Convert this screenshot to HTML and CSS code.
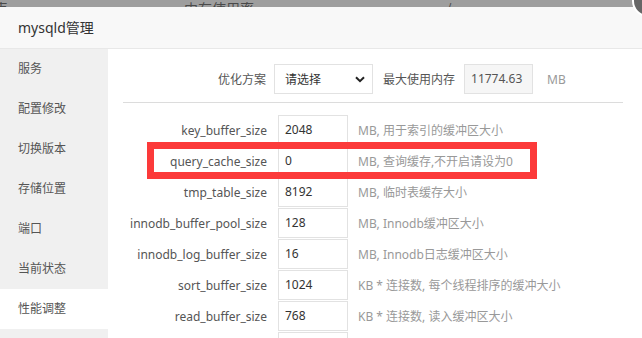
FILE: index.html
```html
<!DOCTYPE html>
<html lang="zh-CN">
<head>
  <meta charset="UTF-8">
  <title>mysqld管理</title>
  <link rel="stylesheet" href="styles.css">
</head>
<body>
  <!-- page behind the dialog, dimmed -->
  <div class="shade">
    <span class="shade-a">表</span>
    <span class="shade-b">内存使用率</span>
    <span class="shade-c">/</span>
  </div>

  <div class="dialog">
    <div class="dialog-title">mysqld管理</div>
    <span class="close-btn"></span>

    <div class="dialog-body">
      <ul class="side-menu">
        <li>服务</li>
        <li>配置修改</li>
        <li>切换版本</li>
        <li>存储位置</li>
        <li>端口</li>
        <li>当前状态</li>
        <li class="active">性能调整</li>
      </ul>

      <div class="panel">
        <div class="top-row">
          <span class="label">优化方案</span>
          <div class="select-box">
            <span>请选择</span>
            <svg width="10" height="7" viewBox="0 0 10 7"><path d="M1 1.2 5 5.2 9 1.2" fill="none" stroke="#222" stroke-width="2"/></svg>
          </div>
          <span class="mem-label">最大使用内存</span>
          <div class="field field-ro">11774.63</div>
          <span class="unit">MB</span>
        </div>

        <div class="divider"></div>

        <div class="form-rows">
          <div class="form-row">
            <span class="label">key_buffer_size</span>
            <div class="field">2048</div>
            <span class="desc">MB, 用于索引的缓冲区大小</span>
          </div>
          <div class="form-row">
            <span class="label">query_cache_size</span>
            <div class="field">0</div>
            <span class="desc">MB, 查询缓存,不开启请设为0</span>
          </div>
          <div class="form-row">
            <span class="label">tmp_table_size</span>
            <div class="field">8192</div>
            <span class="desc">MB, 临时表缓存大小</span>
          </div>
          <div class="form-row">
            <span class="label">innodb_buffer_pool_size</span>
            <div class="field">128</div>
            <span class="desc">MB, Innodb缓冲区大小</span>
          </div>
          <div class="form-row">
            <span class="label">innodb_log_buffer_size</span>
            <div class="field">16</div>
            <span class="desc">MB, Innodb日志缓冲区大小</span>
          </div>
          <div class="form-row">
            <span class="label">sort_buffer_size</span>
            <div class="field">1024</div>
            <span class="desc">KB * 连接数, 每个线程排序的缓冲大小</span>
          </div>
          <div class="form-row">
            <span class="label">read_buffer_size</span>
            <div class="field">768</div>
            <span class="desc">KB * 连接数, 读入缓冲区大小</span>
          </div>
          <div class="form-row form-row-cut">
            <span class="label"></span>
            <div class="field"></div>
          </div>
        </div>

        <!-- red mark drawn on the screenshot -->
        <div class="mark"></div>
      </div>
    </div>
  </div>
</body>
</html>
```

FILE: styles.css
```css
* {
  margin: 0;
  padding: 0;
  box-sizing: border-box;
}

html, body {
  width: 100%;
  height: 100%;
  overflow: hidden;
}

body {
  position: relative;
  background: #fff;
  font-family: "Noto Sans", "Noto Sans CJK SC", sans-serif;
  font-size: 12px;
  color: #555;
}

/* dimmed page at the very top */
.shade {
  position: relative;
  height: 7px;
  background: #9e9e9e;
  overflow: hidden;
  font-family: "Noto Sans CJK SC", sans-serif;
  font-size: 14px;
  color: #4a4a4a;
}

.shade span {
  position: absolute;
  top: 1px;
  line-height: 14px;
}

.shade-a { left: -6px; }
.shade-b { left: 184px; }
.shade-c { left: 446px; }

.dialog {
  position: relative;
}

.dialog-title {
  height: 42px;
  padding-left: 18px;
  line-height: 41px;
  background: #f8f8f8;
  border-bottom: 1px solid #e8e8e8;
  font-size: 14px;
  color: #333;
}

.close-btn {
  position: absolute;
  top: -22px;
  left: 632px;
  width: 32px;
  height: 32px;
  border-radius: 50%;
  background: #666;
  border: 2px solid #fff;
}

.dialog-body {
  display: flex;
  height: 289px;
  overflow: hidden;
}

.side-menu {
  list-style: none;
  width: 108px;
  flex-shrink: 0;
  background: #f0f0f0;
}

.side-menu li {
  height: 40px;
  line-height: 40px;
  padding-left: 18px;
  color: #555;
}

.side-menu li.active {
  background: #fff;
}

.panel {
  position: relative;
  flex: 1;
  padding-top: 15px;
}

.top-row {
  display: flex;
  align-items: center;
  height: 30px;
}

.label {
  width: 158px;
  flex-shrink: 0;
  text-align: right;
  white-space: nowrap;
  color: #555;
}

.top-row .label {
  margin-right: 8px;
}

.select-box {
  display: flex;
  align-items: center;
  justify-content: space-between;
  width: 99px;
  height: 30px;
  padding: 0 7px 0 10px;
  border: 1px solid #e2e2e2;
  color: #333;
}

.mem-label {
  margin: 0 9px 0 10px;
  color: #555;
}

.field {
  width: 70px;
  height: 30px;
  line-height: 28px;
  padding-left: 6px;
  border: 1px solid #e2e2e2;
  color: #333;
  background: #fff;
}

.field-ro {
  width: 69px;
  background: #f6f6f6;
  color: #555;
}

.unit {
  margin-left: 14px;
  color: #999;
}

.divider {
  height: 1px;
  margin: 8px 19px 12px 15px;
  background: #dcdcdc;
}

.form-rows {
  display: flex;
  flex-direction: column;
  gap: 1px;
}

.form-row {
  display: flex;
  align-items: center;
  height: 30px;
}

.form-row-cut {
  height: 7px;
  align-items: flex-start;
  overflow: hidden;
}

.form-row .label {
  width: 159px;
  margin-right: 11px;
}

.desc {
  margin-left: 10px;
  color: #999;
  white-space: nowrap;
}

.mark {
  position: absolute;
  left: 39px;
  top: 93px;
  width: 390px;
  height: 37px;
  border: 7px solid #fc3a3a;
}
```
